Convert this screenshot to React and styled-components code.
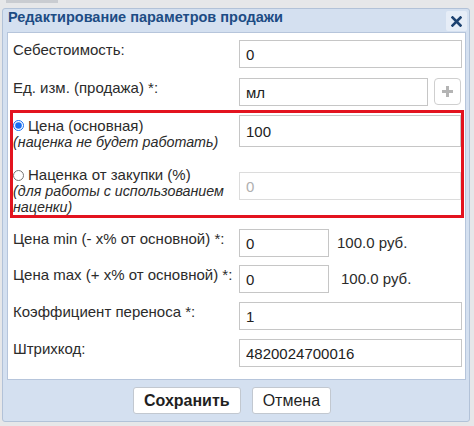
import React from 'react'
import styled, { createGlobalStyle } from 'styled-components'

const GlobalStyle = createGlobalStyle`
  html, body {
    margin: 0;
    padding: 0;
    background: #e6e7e9;
    font-family: "Liberation Sans", Arial, sans-serif;
  }
`

const Backdrop = styled.div`
  width: 474px;
  height: 426px;
  overflow: hidden;
`

const BehindStrip = styled.div`
  height: 8px;
  box-sizing: border-box;
  padding: 0 0 0 6px;
  display: flex;
  align-items: flex-start;
`

const BehindBar = styled.div`
  width: 52px;
  height: 3px;
  background: #c9ccd1;
`

const Dialog = styled.div`
  margin-left: 2px;
  width: 468px;
  height: 414px;
  background: #d4e0f0;
  border: 1px solid #b2c2d8;
  border-radius: 3px;
  box-sizing: border-box;
  display: flex;
  flex-direction: column;
`

const TitleBar = styled.div`
  height: 23px;
  display: flex;
  align-items: flex-start;
  justify-content: space-between;
  padding: 0 2px 0 5px;
`

const Title = styled.div`
  font-weight: bold;
  font-size: 14.5px;
  line-height: 16px;
  color: #1d4c84;
`

const CloseButton = styled.button`
  width: 21px;
  height: 20px;
  margin-top: 2px;
  padding: 0;
  border: none;
  border-radius: 2px;
  background: #e6edf7;
  display: flex;
  align-items: center;
  justify-content: center;
`

const Content = styled.div`
  margin-left: 4px;
  width: 459px;
  box-sizing: border-box;
  background: #ffffff;
  border: 1px solid #b6c5db;
  padding: 7px 3px 12px 5px;
  display: flex;
  flex-direction: column;
`

const Row = styled.div`
  display: flex;
  align-items: flex-start;
  margin-top: ${p => p.$top || 0}px;
`

const Label = styled.div`
  width: 226px;
  flex-shrink: 0;
  font-size: 15px;
  line-height: 20px;
  color: #2b2b2b;
`

const Input = styled.input`
  box-sizing: border-box;
  width: ${p => p.$width}px;
  height: ${p => p.$height || 28}px;
  margin: ${p => p.$top || 0}px 0 0 0;
  border: 1px solid ${p => (p.disabled ? '#dcdcdc' : '#c6c6c6')};
  background: #ffffff;
  padding: 0 6px;
  font-family: "Liberation Sans", Arial, sans-serif;
  font-size: 15px;
  color: ${p => (p.disabled ? '#b0b0b0' : '#222222')};
  outline: none;
`

const AddButton = styled.button`
  width: 27px;
  height: 27px;
  margin-left: 6px;
  padding: 0;
  box-sizing: border-box;
  border: 1px solid #cfcfcf;
  border-radius: 4px;
  background: #ffffff;
  display: flex;
  align-items: center;
  justify-content: center;
`

const RedBox = styled.div`
  margin: 4px -2px 0 -3px;
  border: 3px solid #e3131f;
  overflow: hidden;
  padding: 2px 0 0 0;
  display: flex;
  flex-direction: column;
`

const OptionRow = styled.div`
  display: flex;
  align-items: flex-start;
  margin-top: ${p => p.$top || 0}px;
`

const OptionLabel = styled.div`
  width: 226px;
  flex-shrink: 0;
  font-size: 15px;
  line-height: ${p => p.$lh}px;
  padding-top: ${p => p.$pad || 0}px;
  color: #2b2b2b;
`

const RadioLine = styled.label`
  display: flex;
  align-items: center;
  gap: 4px;
`

const Radio = styled.input`
  width: 11px;
  height: 11px;
  margin: 0;
  accent-color: #1a6ef0;
`

const Hint = styled.div`
  font-style: italic;
  font-size: 14.3px;
  max-width: 220px;
`

const Suffix = styled.div`
  margin-left: ${p => p.$gap}px;
  font-size: 15px;
  line-height: 28px;
  color: #2b2b2b;
`

const Footer = styled.div`
  flex: 1;
  display: flex;
  justify-content: center;
  align-items: flex-start;
  gap: 11px;
  padding: 7px 8px 0 0;
`

const Button = styled.button`
  height: 27px;
  padding: 0 ${p => p.$pad}px;
  box-sizing: border-box;
  border: 1px solid #c2c8d0;
  border-radius: 3px;
  background: #ffffff;
  font-family: "Liberation Sans", Arial, sans-serif;
  font-size: 16px;
  font-weight: ${p => (p.$primary ? 'bold' : 'normal')};
  color: #1f1f1f;
`

const CloseIcon = () => (
  <svg width="11" height="11" viewBox="0 0 11 11">
    <path d="M1.5 1.5 L9.5 9.5 M9.5 1.5 L1.5 9.5" stroke="#1d4270" strokeWidth="2.6" strokeLinecap="square" />
  </svg>
)

const PlusIcon = () => (
  <svg width="13" height="13" viewBox="0 0 13 13">
    <path d="M6.5 1 V12 M1 6.5 H12" stroke="#b4b4b4" strokeWidth="3" />
  </svg>
)

const App = () => {
  return (
    <Backdrop>
      <GlobalStyle />
      <BehindStrip><BehindBar /></BehindStrip>
      <Dialog>
        <TitleBar>
          <Title>Редактирование параметров продажи</Title>
          <CloseButton><CloseIcon /></CloseButton>
        </TitleBar>
        <Content>
          <Row>
            <Label>Себестоимость:</Label>
            <Input $width={223} defaultValue="0" />
          </Row>
          <Row $top={10}>
            <Label>Ед. изм. (продажа) *:</Label>
            <Input $width={189} defaultValue="мл" />
            <AddButton><PlusIcon /></AddButton>
          </Row>
          <RedBox>
            <OptionRow>
              <OptionLabel $lh={17} $pad={2}>
                <RadioLine><Radio type="radio" name="price" defaultChecked />Цена (основная)</RadioLine>
                <Hint>(наценка не будет работать)</Hint>
              </OptionLabel>
              <Input $width={226} $height={32} defaultValue="100" />
            </OptionRow>
            <OptionRow $top={16}>
              <OptionLabel $lh={16}>
                <RadioLine><Radio type="radio" name="price" />Наценка от закупки (%)</RadioLine>
                <Hint>(для работы с использованием наценки)</Hint>
              </OptionLabel>
              <Input $width={226} $top={5} disabled defaultValue="0" />
            </OptionRow>
          </RedBox>
          <Row $top={11}>
            <Label>Цена min (- x% от основной) *:</Label>
            <Input $width={90} defaultValue="0" />
            <Suffix $gap={8}>100.0 руб.</Suffix>
          </Row>
          <Row $top={8}>
            <Label>Цена max (+ x% от основной) *:</Label>
            <Input $width={90} defaultValue="0" />
            <Suffix $gap={12}>100.0 руб.</Suffix>
          </Row>
          <Row $top={9}>
            <Label>Коэффициент переноса *:</Label>
            <Input $width={223} defaultValue="1" />
          </Row>
          <Row $top={9}>
            <Label>Штрихкод:</Label>
            <Input $width={223} defaultValue="4820024700016" />
          </Row>
        </Content>
        <Footer>
          <Button $primary $pad={10}>Сохранить</Button>
          <Button $pad={10}>Отмена</Button>
        </Footer>
      </Dialog>
    </Backdrop>
  )
}

export default App
